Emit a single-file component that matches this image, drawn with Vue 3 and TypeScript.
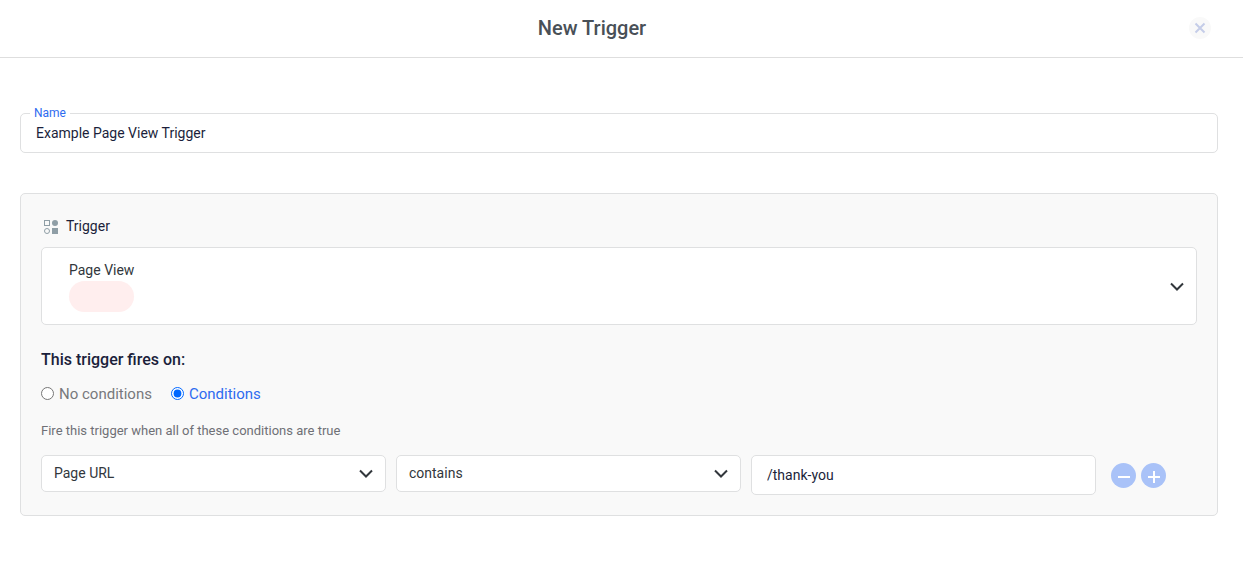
<script setup lang="ts">
import { ref } from 'vue'

type FireMode = 'none' | 'conditions'

interface Condition {
  variable: string
  operator: string
  value: string
}

const name = ref<string>('Example Page View Trigger')
const triggerType = ref<string>('Page View')
const mode = ref<FireMode>('conditions')
const conditions = ref<Condition[]>([
  { variable: 'Page URL', operator: 'contains', value: '/thank-you' },
])

function addCondition(): void {
  conditions.value.push({ variable: 'Page URL', operator: 'contains', value: '' })
}

function removeCondition(index: number): void {
  if (conditions.value.length > 1) conditions.value.splice(index, 1)
}
</script>

<template>
  <div class="dialog">
    <header class="header">
      <h1 class="title">New Trigger</h1>
      <button class="close" type="button" aria-label="Close">
        <svg viewBox="0 0 22 22" width="22" height="22" aria-hidden="true">
          <path d="M6.5 6.5l9 9M15.5 6.5l-9 9" fill="none" stroke="#c5cde8" stroke-width="2" />
        </svg>
      </button>
    </header>

    <main class="body">
      <div class="name-field">
        <label class="name-label" for="trigger-name">Name</label>
        <input id="trigger-name" v-model="name" class="text-input" type="text" />
      </div>

      <section class="panel">
        <label class="panel-label" for="trigger-type">
          <svg class="shapes" viewBox="0 0 14 14" width="14" height="14" aria-hidden="true">
            <rect x="0.5" y="0.5" width="5" height="5" fill="none" stroke="#8f9ea6" />
            <circle cx="11" cy="3" r="3" fill="#8f9ea6" />
            <circle cx="3" cy="11" r="2.5" fill="none" stroke="#8f9ea6" />
            <rect x="8" y="8" width="6" height="6" fill="#8f9ea6" />
          </svg>
          Trigger
        </label>

        <div class="select-box type-box">
          <select id="trigger-type" v-model="triggerType" class="select type-select">
            <option>Page View</option>
          </select>
          <span class="pill"></span>
          <svg class="chevron" viewBox="0 0 14 9" width="14" height="9" aria-hidden="true">
            <path d="M1 1.500l6 6L13 1.500" fill="none" stroke="#32373c" stroke-width="2" />
          </svg>
        </div>

        <h2 class="subtitle">This trigger fires on:</h2>

        <div class="radios">
          <label class="radio" :class="{ active: mode === 'none' }">
            <input v-model="mode" type="radio" name="mode" value="none" />
            No conditions
          </label>
          <label class="radio" :class="{ active: mode === 'conditions' }">
            <input v-model="mode" type="radio" name="mode" value="conditions" />
            Conditions
          </label>
        </div>

        <p class="hint">Fire this trigger when all of these conditions are true</p>

        <div v-for="(condition, index) in conditions" :key="index" class="row">
          <div class="select-box">
            <select v-model="condition.variable" class="select" aria-label="Variable">
              <option>Page URL</option>
            </select>
            <svg class="chevron" viewBox="0 0 14 9" width="14" height="9" aria-hidden="true">
              <path d="M1 1.500l6 6L13 1.500" fill="none" stroke="#32373c" stroke-width="2" />
            </svg>
          </div>
          <div class="select-box">
            <select v-model="condition.operator" class="select" aria-label="Operator">
              <option>contains</option>
            </select>
            <svg class="chevron" viewBox="0 0 14 9" width="14" height="9" aria-hidden="true">
              <path d="M1 1.500l6 6L13 1.500" fill="none" stroke="#32373c" stroke-width="2" />
            </svg>
          </div>
          <input v-model="condition.value" class="text-input" type="text" aria-label="Value" />
          <div class="actions">
            <button class="round" type="button" aria-label="Remove condition" @click="removeCondition(index)">
              <svg viewBox="0 0 25 25" width="25" height="25" aria-hidden="true">
                <path d="M7 14h12" fill="none" stroke="#fff" stroke-width="2" />
              </svg>
            </button>
            <button class="round" type="button" aria-label="Add condition" @click="addCondition">
              <svg viewBox="0 0 25 25" width="25" height="25" aria-hidden="true">
                <path d="M7 14h12M13 8v12" fill="none" stroke="#fff" stroke-width="2" />
              </svg>
            </button>
          </div>
        </div>
      </section>
    </main>
  </div>
</template>

<style>
body {
  margin: 0;
  background: #fff;
}
</style>

<style scoped>
.dialog,
.dialog * {
  box-sizing: border-box;
}

.dialog {
  font-family: Roboto, "Liberation Sans", sans-serif;
  font-size: 14px;
  line-height: 20px;
  color: #1b1f3b;
}

.header {
  display: flex;
  align-items: center;
  gap: 5px;
  padding: 16px 32px 17px 0;
  border-bottom: 1px solid #dedede;
}

.title {
  flex: 1;
  margin: 0;
  font-size: 20px;
  line-height: 24px;
  font-weight: 500;
  text-align: center;
  color: #495057;
}

.close {
  display: flex;
  padding: 0;
  border: 0;
  border-radius: 50%;
  background: #f9f9f9;
}

.body {
  padding: 55px 25px 40px 20px;
}

.name-field {
  position: relative;
  margin-bottom: 40px;
}

.name-label {
  position: absolute;
  top: -8px;
  left: 10px;
  padding: 0 4px;
  font-size: 12px;
  line-height: 16px;
  color: #2e6bf0;
  background: #fff;
}

.text-input {
  display: block;
  width: 100%;
  height: 40px;
  padding: 0 15px;
  border: 1px solid #dfe0e1;
  border-radius: 5px;
  font: inherit;
  color: inherit;
  background: #fff;
}

.panel {
  padding: 22px 20px 20px;
  border: 1px solid #dfe0e1;
  border-radius: 5px;
  background: #f9f9f9;
}

.panel-label {
  display: flex;
  align-items: center;
  gap: 8px;
  margin: 0 0 11px 3px;
}

.shapes {
  margin-top: 2px;
}

.select-box {
  display: grid;
  align-items: center;
  border: 1px solid #dfe0e1;
  border-radius: 5px;
  background: #fff;
}

.select-box > * {
  grid-area: 1 / 1;
}

.select {
  appearance: none;
  width: 100%;
  height: 35px;
  padding: 0 40px 1px 12px;
  border: 0;
  border-radius: 5px;
  font: inherit;
  color: #32373c;
  background: transparent;
}

.type-select {
  height: 76px;
  padding: 0 40px 32px 27px;
}

.chevron {
  justify-self: end;
  margin-right: 12px;
  pointer-events: none;
}

.pill {
  align-self: end;
  width: 65px;
  height: 31px;
  margin: 0 0 12px 27px;
  border-radius: 16px;
  background: #ffeeee;
  pointer-events: none;
}

.subtitle {
  margin: 25px 0 14px;
  font-size: 16px;
  line-height: 20px;
  font-weight: 500;
}

.radios {
  display: flex;
  gap: 19px;
  margin-bottom: 17px;
  font-size: 15px;
}

.radio {
  display: flex;
  align-items: center;
  gap: 5px;
  color: #77787c;
}

.radio.active {
  color: #2e6bf0;
}

.radio input {
  width: 13px;
  height: 13px;
  margin: 0 0 1px;
  accent-color: #0067ff;
}

.hint {
  margin: 0 0 14px;
  font-size: 13px;
  color: #6f7076;
}

.row {
  display: grid;
  grid-template-columns: repeat(3, minmax(0, 1fr)) 91px;
  column-gap: 10px;
  align-items: start;
}

.row + .row {
  margin-top: 10px;
}

.actions {
  display: flex;
  align-items: center;
  gap: 5px;
  height: 40px;
  padding-left: 5px;
}

.round {
  display: flex;
  padding: 0;
  border: 0;
  border-radius: 50%;
  background: #a9c2f8;
}
</style>
